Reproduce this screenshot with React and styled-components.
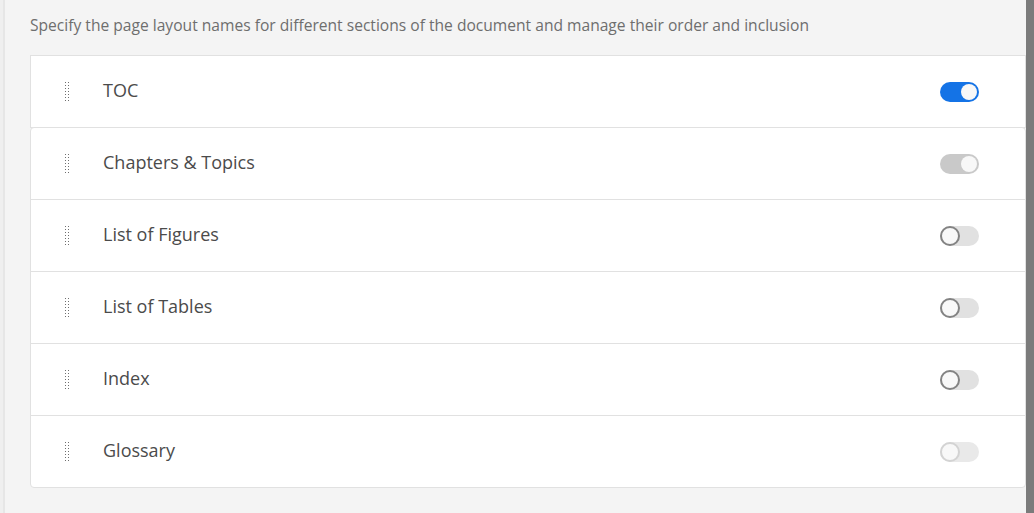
import styled, { createGlobalStyle } from 'styled-components';

const GlobalStyle = createGlobalStyle`
    html, body {
        margin: 0;
        padding: 0;
        background: #f4f4f4;
    }
    body {
        font-family: "Open Sans", Lato, "Liberation Sans", sans-serif;
    }
`;

const Page = styled.div`
    display: flex;
    width: 1034px;
    height: 513px;
    overflow: hidden;
    background: #f4f4f4;
`;

const EdgeStrip = styled.div`
    width: 3px;
    background: #efefef;
    border-right: 2px solid #e6e6e6;
`;

const Main = styled.div`
    flex: 1;
    padding: 0 0 0 25px;
    display: flex;
    flex-direction: column;
`;

const Scrollbar = styled.div`
    width: 8px;
    background: #7b7b7b;
`;

const Intro = styled.p`
    margin: 0;
    height: 55px;
    line-height: 51px;
    font-size: 15.6px;
    color: #6e6e6e;
`;

const Card = styled.div`
    background: #fff;
    border: 1px solid #e1e1e1;
    border-radius: ${props => props.rounded ? '4px' : '0'};
    margin-top: ${props => props.overlap ? '-1px' : '0'};
`;

const Row = styled.div`
    display: flex;
    align-items: center;
    height: 71px;
    padding: 0 46px 0 34px;
    & + & {
        border-top: 1px solid #e1e1e1;
    }
`;

const Label = styled.span`
    flex: 1;
    margin-left: 33px;
    margin-top: -4px;
    font-size: 18px;
    color: #4b4b4b;
`;

const Track = styled.div`
    position: relative;
    width: 39px;
    height: 20px;
    border-radius: 10px;
    background: ${props => props.on ? (props.disabled ? '#c9c9c9' : '#1473e6') : (props.disabled ? '#e9e9e9' : '#e1e1e1')};
`;

const Knob = styled.div`
    position: absolute;
    top: ${props => props.on ? '2px' : '0'};
    left: ${props => props.on ? '21px' : '0'};
    width: ${props => props.on ? '16px' : '20px'};
    height: ${props => props.on ? '16px' : '20px'};
    box-sizing: border-box;
    border-radius: 50%;
    background: #f8f8f8;
    border: ${props => props.on ? 'none' : `2px solid ${props.disabled ? '#d3d3d3' : '#838383'}`};
`;

const HandleIcon = styled.svg`
    display: block;
    flex-shrink: 0;
`;

const Handle = () => (
    <HandleIcon width="5" height="20" viewBox="0 0 5 20" shapeRendering="crispEdges">
        {Array.from({ length: 7 }).map((_, i) => (
            <g key={i} fill="#6f6f6f">
                <rect x="0" y={i * 3} width="1" height="1" />
                <rect x="3" y={i * 3} width="1" height="1" />
            </g>
        ))}
    </HandleIcon>
);

const Toggle = ({ on, disabled }) => (
    <Track on={on} disabled={disabled}>
        <Knob on={on} disabled={disabled} />
    </Track>
);

const Item = ({ label, on, disabled }) => (
    <Row>
        <Handle />
        <Label>{label}</Label>
        <Toggle on={on} disabled={disabled} />
    </Row>
);

const sections = [
    { label: 'Chapters & Topics', on: true, disabled: true },
    { label: 'List of Figures' },
    { label: 'List of Tables' },
    { label: 'Index' },
    { label: 'Glossary', disabled: true },
];

const App = () => {
    return (
        <Page>
            <GlobalStyle />
            <EdgeStrip />
            <Main>
                <Intro>Specify the page layout names for different sections of the document and manage their order and inclusion</Intro>
                <Card>
                    <Item label="TOC" on />
                </Card>
                <Card rounded overlap>
                    {sections.map(s => (
                        <Item key={s.label} {...s} />
                    ))}
                </Card>
            </Main>
            <Scrollbar />
        </Page>
    )
};

export default App;
